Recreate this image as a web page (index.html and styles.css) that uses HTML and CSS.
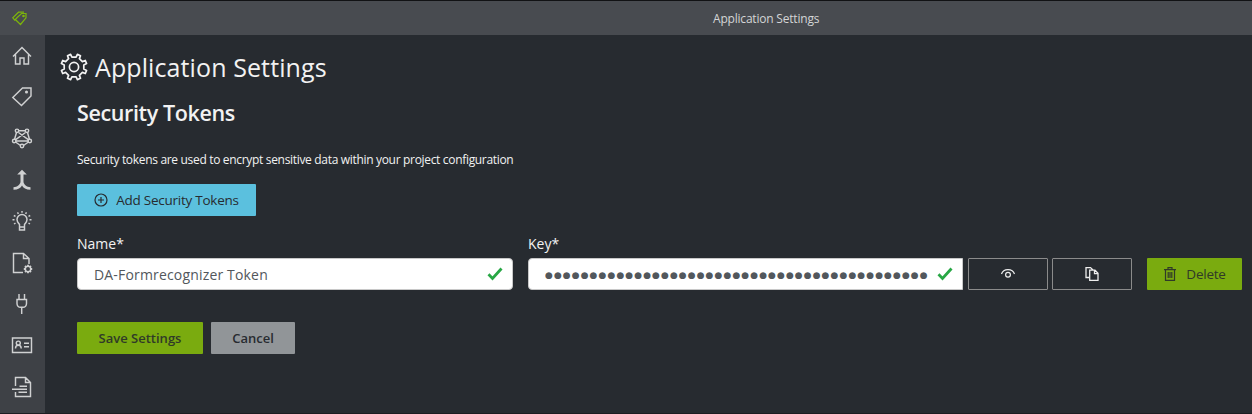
FILE: index.html
```html
<!DOCTYPE html>
<html lang="en">
<head>
<meta charset="utf-8">
<title>Application Settings</title>
<link rel="stylesheet" href="styles.css">
</head>
<body>
<header class="topbar">
  <svg class="logo" viewBox="0 0 16 16"><path d="M5.200 6.500 9.500 2.500H14v4.300L8.500 13.500 3.300 8.500zM3.500 8.800 2.800 9.200.800 6.800 6.500 1.200h5.500"/><circle cx="11.500" cy="5" r=".7"/></svg>
  <span class="topbar-title">Application Settings</span>
</header>
<div class="shell">
  <nav class="sidebar">
    <a class="nav-item"><svg viewBox="0 0 20 20"><path d="m1 10.500 9-9 9 9M3.500 8.500V18h4.500v-6h4v6h4.500V8.500"/></svg></a>
    <a class="nav-item"><svg viewBox="0 0 20 20"><path d="M.8 10.500 10.500 1H19v8l-9.500 9.500z"/><circle cx="14.500" cy="5" r=".8"/></svg></a>
    <a class="nav-item"><svg viewBox="0 0 20 20"><path d="m4.500 4.500-2 7m13-7 2 7M6.700 2.800h6.600M3.700 13h12.600M3.500 14l5 3.500m8-3.500-5 3.500M6.500 4.500l9.800 7.200m-2.800-7.200-9.800 7.200"/><circle cx="5" cy="2.800" r="1.700"/><circle cx="15" cy="2.800" r="1.700"/><circle cx="2.200" cy="13" r="1.700"/><circle cx="17.800" cy="13" r="1.700"/><circle cx="10" cy="18" r="1.700"/></svg></a>
    <a class="nav-item"><svg viewBox="0 0 20 20"><path class="solid" d="m10-.2 4.800 4.700h-3.300V12c.4 2.600 3.200 4.900 7 5.300v2.500c-4.500-.1-7.300-2-8.500-4.400-1.200 2.400-4 4.300-8.500 4.400v-2.500c3.800-.4 6.600-2.700 7-5.300V4.500H5.200z"/></svg></a>
    <a class="nav-item"><svg viewBox="0 0 20 20"><path d="M7.500 16v-2.500C6.500 12 5 10.800 5 8.500a5 5 0 0 1 10 0c0 2.300-1.500 3.500-2.500 5V16zM7.500 16v3h5v-3M10 0v1.800M5.500 1.300l.9 1.600m8.100-1.600-.9 1.600M1.800 4.500l1.700.9m14.700-.9-1.700.9M.5 8.800h2m17 0h-2M2 13l1.500-.9M18 13l-1.500-.9"/></svg></a>
    <a class="nav-item"><svg viewBox="0 0 20 20"><path d="M11 19.500H1.500V.5h10L17 5.500V11M11.500.5v5H17"/><circle cx="16" cy="16" r="2.700"/><path d="M16 11.800v1.500m0 5.400v1.500M11.800 16h1.500m5.400 0h1.500M13 13l1.100 1.100m3.800 3.800L19 19m0-6-1.100 1.100M14.100 17.900 13 19" stroke-width="1.800"/></svg></a>
    <a class="nav-item"><svg viewBox="0 0 20 20"><path d="M7 0v5.500m5.500-5.500v5.500M5 5.500h9.500v4c0 2-1.500 3.800-3.500 3.800H8.500C6.500 13.300 5 11.500 5 9.500zM9.700 13.300V20"/></svg></a>
    <a class="nav-item"><svg viewBox="0 0 20 20"><path d="M.5 3h19v14.500H.5zM12 8.200h5M12 11.700h5M3.500 13.400c0-1.700 1-3.200 2.800-3.200s2.900 1.500 2.900 3.200"/><circle cx="6.300" cy="8.100" r="2"/></svg></a>
    <a class="nav-item"><svg viewBox="0 0 20 20"><path d="M3.500 9V.5h10L18.500 5.500V19.500h-15V15M13.500.5v5h5M0 12.200h8.500M7.500 9.200H15M8.500 12.200H15M6.500 15.300H15"/></svg></a>
  </nav>
  <main class="content">
    <h1 class="page-title"><svg viewBox="0 0 28 28"><circle cx="14" cy="14" r="4.600"/><path d="M23.800 16.100 26.600 17.400 25.300 20.500 22.400 19.400 19.400 22.400 20.500 25.300 17.400 26.600 16.100 23.800H11.900L10.600 26.600 7.500 25.300 8.600 22.400 5.600 19.400 2.700 20.500 1.400 17.400 4.200 16.100V11.900L1.400 10.600 2.700 7.500 5.600 8.600 8.600 5.600 7.500 2.700 10.600 1.400 11.900 4.200H16.100L17.400 1.400 20.500 2.700 19.400 5.600 22.400 8.600 25.300 7.500 26.600 10.600 23.800 11.900z"/></svg><span>Application Settings</span></h1>
    <section class="tokens">
      <h2 class="section-title"><span>Security Tokens</span></h2>
      <p class="description"><span>Security tokens are used to encrypt sensitive data within your project configuration</span></p>
      <button class="btn btn-add"><svg viewBox="0 0 14 14"><circle cx="7" cy="7" r="6"/><path d="M7 4v6M4 7h6"/></svg><span>Add Security Tokens</span></button>
      <div class="token-row">
        <div class="field field-name">
          <label>Name*</label>
          <div class="input"><span class="value">DA-Formrecognizer Token</span><svg class="check" viewBox="0 0 16 14"><path d="m1.500 7.300 4 4.200L14.500 1.500"/></svg></div>
        </div>
        <div class="field field-key">
          <label>Key*</label>
          <div class="input input-key"><span class="dots">●●●●●●●●●●●●●●●●●●●●●●●●●●●●●●●●●●●●●●●●●●●</span><svg class="check" viewBox="0 0 16 14"><path d="m1.500 7.300 4 4.200L14.500 1.500"/></svg></div>
        </div>
        <button class="btn btn-outline"><svg viewBox="0 0 14 14"><path d="M.5 7C1.500 4 4 2.600 7 2.600S12.500 4 13.500 7"/><circle cx="7" cy="7.700" r="2.400"/></svg></button>
        <button class="btn btn-outline"><svg viewBox="0 0 14 14"><path d="M4 10.500H1V.6h4.500L8 3M4.700 3.200H10l3 3v7.200H4.700zM9.500 3.200v3.500H13" stroke-width="1.300"/></svg></button>
        <button class="btn btn-delete"><svg viewBox="0 0 14 14"><path d="M1 2.600h12M5 2.500V.6h4v1.900M2.500 2.600v10.800h9V2.600M5.200 5v6M7 5v6M8.800 5v6"/></svg><span>Delete</span></button>
      </div>
      <div class="actions">
        <button class="btn btn-save"><span>Save Settings</span></button>
        <button class="btn btn-cancel"><span>Cancel</span></button>
      </div>
    </section>
  </main>
</div>
</body>
</html>
```
FILE: styles.css
```css
* { box-sizing: border-box; }
body {
  margin: 0;
  width: 1252px;
  height: 414px;
  overflow: hidden;
  display: flex;
  flex-direction: column;
  background: #272b30;
  border-bottom: 1px solid #1c1d21;
  color: #f2f2f2;
  font-family: "Open Sans", "Noto Sans", sans-serif;
}
svg { fill: none; stroke: currentColor; stroke-width: 1.200; flex: none; overflow: visible; }
h1, h2, p { margin: 0; font-weight: 400; }
span, label { white-space: nowrap; }
.topbar {
  height: 35px;
  flex: none;
  display: flex;
  align-items: center;
  border-top: 1px solid #111214;
  background: #484b50;
  padding-left: 12px;
}
.logo { width: 16px; height: 16px; margin-top: 2px; color: #7db50b; }
.topbar-title { margin-left: 685px; font-size: 12px; letter-spacing: -.2px; color: #d4d5d6; }
.shell { display: flex; flex: 1; }
.sidebar { width: 45px; background: #3e4146; color: #d0d1d2; display: flex; flex-direction: column; }
.nav-item { height: 41.400px; padding-right: 1px; display: flex; align-items: center; justify-content: center; }
.nav-item svg { width: 20px; height: 20px; stroke-width: 1.450; }
.solid { fill: currentColor; stroke: none; }
.content { flex: 1; padding: 15px 10px 0 15px; }
.page-title { display: flex; align-items: center; height: 34px; gap: 7px; font-size: 25px; letter-spacing: .1px; }
.page-title svg { width: 28px; height: 28px; stroke-width: 1.700; stroke-linejoin: round; }
.tokens { padding-left: 17px; }
.section-title { height: 58px; line-height: 58px; font-size: 21.500px; font-weight: 600; letter-spacing: -.37px; }
.description { height: 36px; line-height: 36px; font-size: 12px; letter-spacing: -.32px; }
.btn {
  height: 32px;
  border: 0;
  border-radius: 1px;
  display: flex;
  align-items: center;
  justify-content: center;
  font: 13.500px "Open Sans", "Noto Sans", sans-serif;
  letter-spacing: -.25px;
  color: #272b30;
  padding: 0;
}
.btn svg { width: 14px; height: 14px; }
.btn-add { width: 179px; margin-top: 6px; gap: 8px; background: #5bc0de; }
.token-row { display: flex; align-items: flex-end; margin-top: 18px; height: 56px; }
.field { display: flex; flex-direction: column; }
.field label { height: 24px; line-height: 20px; font-size: 14px; }
.field-name { width: 436px; margin-right: 15px; }
.field-key { width: 435px; margin-right: 5px; }
.input {
  height: 32px;
  display: flex;
  align-items: center;
  justify-content: space-between;
  padding: 0 9.500px 0 16px;
  background: #fff;
  border: 1px solid #c8c8c8;
  border-radius: 4px;
  color: #52575c;
  font-size: 14px;
  letter-spacing: .17px;
}
.input-key { border-radius: 4px 0 0 4px; }
.check { width: 16px; height: 14px; color: #28a745; stroke-width: 2.800; }
.dots { width: 383px; padding-top: 2px; overflow: hidden; font: 9px/20px "DejaVu Sans", sans-serif; letter-spacing: 1.070px; }
.btn-outline { width: 80px; margin-right: 4px; border: 1px solid #8b8b8b; background: #272b30; color: #eee; }
.btn-delete { width: 95px; margin-left: 11px; gap: 9px; background: #7aab0f; color: #303a28; }
.actions { display: flex; gap: 8px; margin-top: 32px; }
.actions .btn { font-size: 13px; font-weight: 600; letter-spacing: 0; }
.btn-save { width: 126px; background: #7aab0f; color: #303a28; }
.btn-cancel { width: 84px; background: #919598; }
```
